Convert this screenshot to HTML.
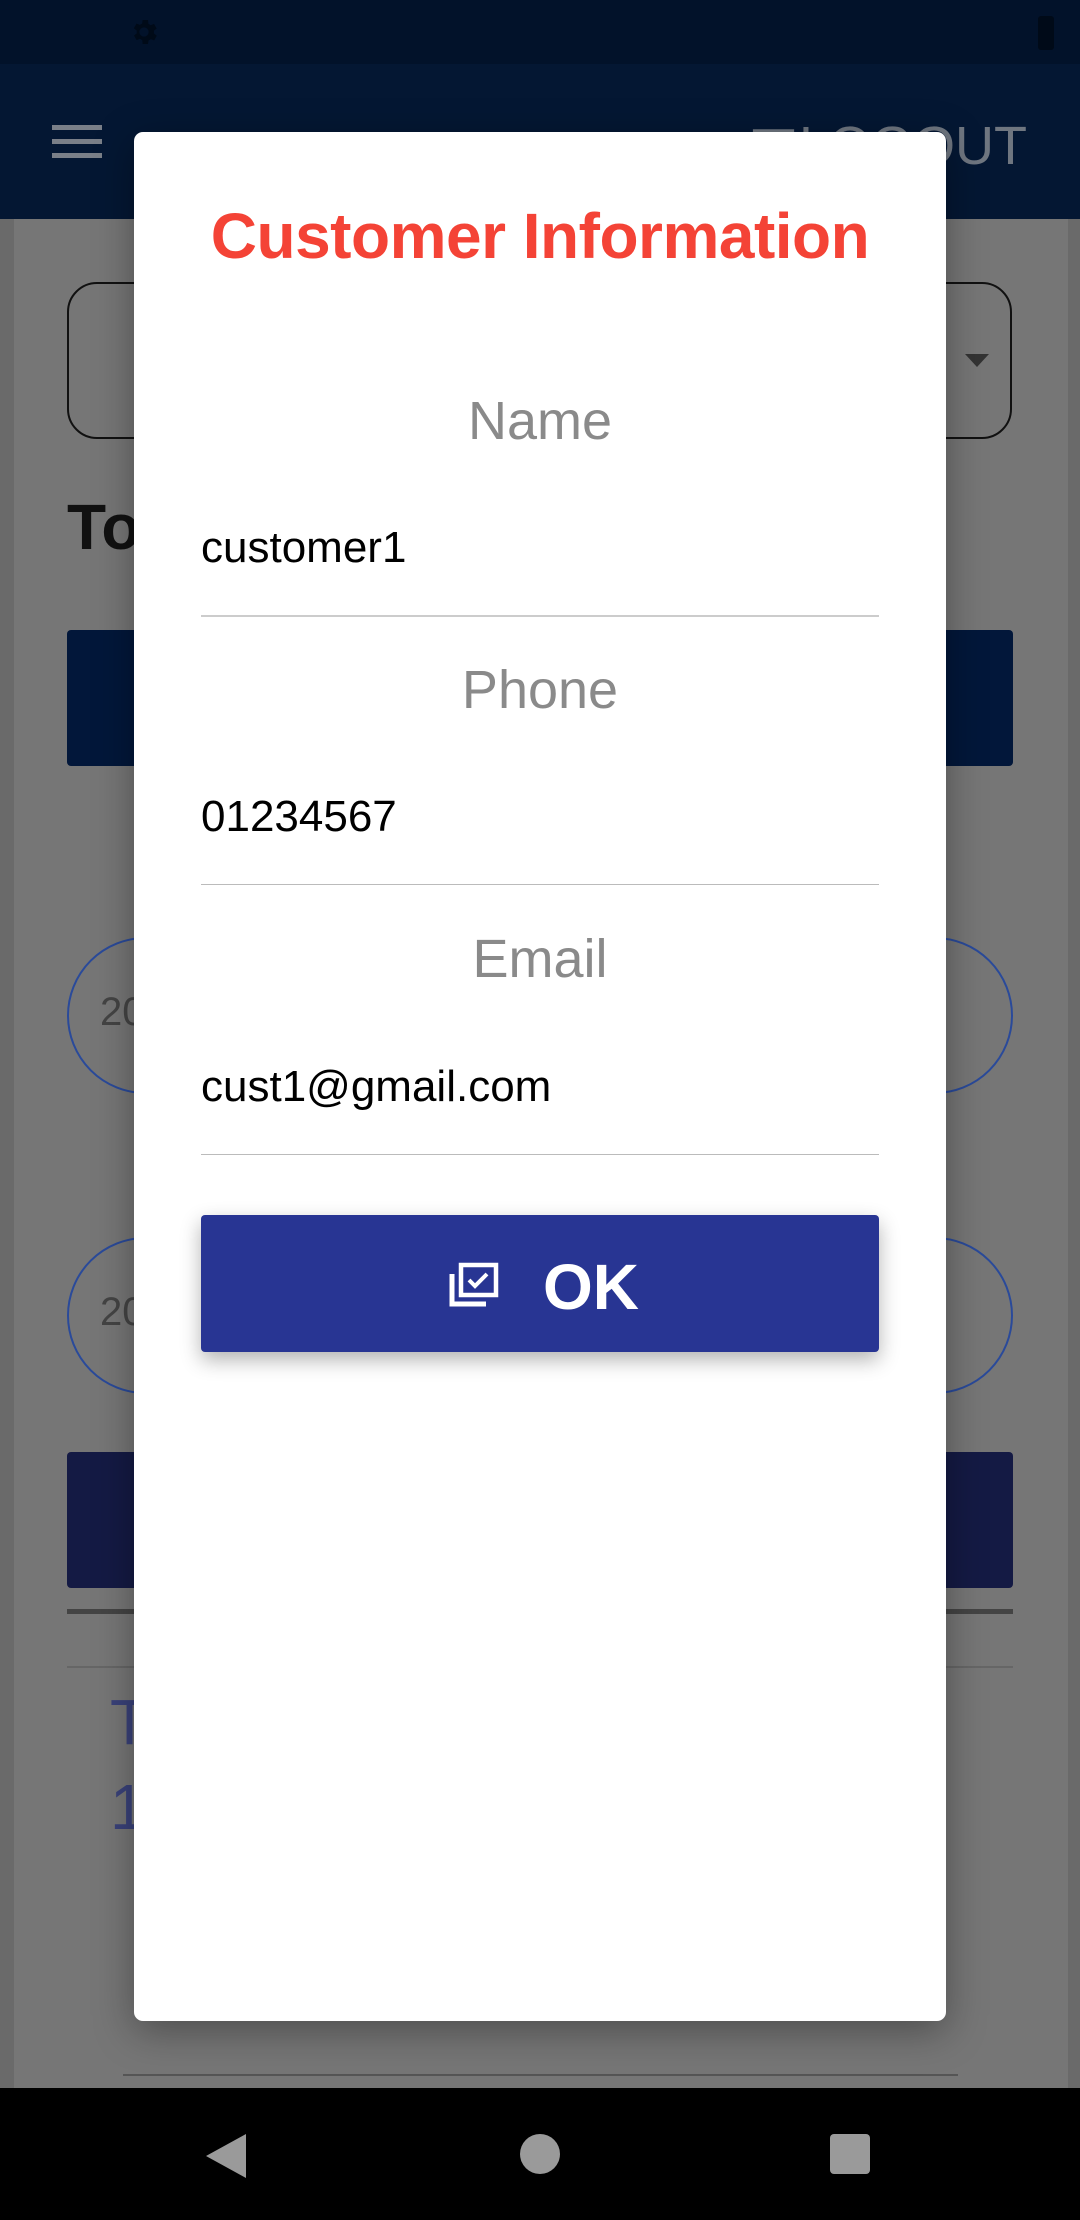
<!DOCTYPE html>
<html><head><meta charset="utf-8"><style>
*{margin:0;padding:0;box-sizing:border-box}
body{width:1080px;height:2220px;position:relative;overflow:hidden;background:#767676;font-family:"Liberation Sans",sans-serif}
.a{position:absolute}
</style></head><body>
<div class="a" style="left:0;top:0;width:1080px;height:64px;background:#02122a"></div>
<svg class="a" style="left:128px;top:16px" width="32" height="32" viewBox="0 0 24 24"><path fill="#000a18" d="M19.4 13a7.5 7.5 0 000-2l2.1-1.6-2-3.5-2.5 1a7 7 0 00-1.7-1L15 3h-4l-.4 2.7a7 7 0 00-1.7 1l-2.5-1-2 3.5L6.6 11a7.5 7.5 0 000 2l-2.1 1.6 2 3.5 2.5-1a7 7 0 001.7 1L11 21h4l.4-2.7a7 7 0 001.7-1l2.5 1 2-3.5zM12 15.5a3.5 3.5 0 110-7 3.5 3.5 0 010 7z"/></svg>
<div class="a" style="left:1038px;top:16px;width:16px;height:34px;background:#000a18;border-radius:3px"></div>
<div class="a" style="left:0;top:64px;width:1080px;height:155px;background:#041733"></div>
<div class="a" style="left:52px;top:125px;width:50px;height:5px;background:#7a7f88;box-shadow:0 14px 0 #7a7f88,0 28px 0 #7a7f88"></div>
<div class="a" style="left:748px;top:114px;font-size:54px;color:#6f7680">▣LOGOUT</div>
<div class="a" style="left:0;top:219px;width:14px;height:1870px;background:#6a6a6a"></div>
<div class="a" style="left:1068px;top:219px;width:12px;height:1870px;background:#6a6a6a"></div>
<div class="a" style="left:67px;top:282px;width:945px;height:157px;border:2px solid #111;border-radius:30px"></div>
<div class="a" style="left:965px;top:354px;width:0;height:0;border-left:12px solid transparent;border-right:12px solid transparent;border-top:13px solid #333"></div>
<div class="a" style="left:67px;top:490px;font-size:64px;font-weight:bold;color:#111">To</div>
<div class="a" style="left:67px;top:630px;width:946px;height:136px;background:#02173a;border-radius:4px"></div>
<div class="a" style="left:67px;top:937px;width:946px;height:157px;border:2px solid #2a4a9a;border-radius:80px"></div>
<div class="a" style="left:100px;top:990px;font-size:40px;color:#444">20</div>
<div class="a" style="left:67px;top:1237px;width:946px;height:157px;border:2px solid #2a4a9a;border-radius:80px"></div>
<div class="a" style="left:100px;top:1290px;font-size:40px;color:#444">20</div>
<div class="a" style="left:67px;top:1452px;width:946px;height:136px;background:#141a44;border-radius:4px"></div>
<div class="a" style="left:67px;top:1609px;width:946px;height:5px;background:#444"></div>
<div class="a" style="left:67px;top:1666px;width:946px;height:2px;background:#666"></div>
<div class="a" style="left:110px;top:1680px;font-size:64px;color:#3a427a;line-height:85px">T<br>1</div>
<div class="a" style="left:123px;top:2074px;width:835px;height:2px;background:#555"></div>
<div class="a" style="left:0;top:2088px;width:1080px;height:132px;background:#000"></div>
<div class="a" style="left:206px;top:2134px;width:0;height:0;border-top:22px solid transparent;border-bottom:22px solid transparent;border-right:40px solid #9a9a9a"></div>
<div class="a" style="left:520px;top:2134px;width:40px;height:40px;border-radius:50%;background:#9a9a9a"></div>
<div class="a" style="left:830px;top:2134px;width:40px;height:40px;border-radius:4px;background:#9a9a9a"></div>

<div class="a" style="left:134px;top:132px;width:812px;height:1889px;background:#fff;border-radius:9px;box-shadow:0 10px 40px rgba(0,0,0,.35)"></div>
<div class="a" style="left:134px;top:199px;width:812px;text-align:center;font-size:64px;font-weight:bold;color:#f44336;letter-spacing:-0.5px">Customer Information</div>
<div class="a" style="left:134px;top:390px;width:812px;text-align:center;font-size:54px;color:#8a8a8a">Name</div>
<div class="a" style="left:201px;top:523px;font-size:44px;color:#000">customer1</div>
<div class="a" style="left:201px;top:615px;width:678px;height:2px;background:#ccc"></div>
<div class="a" style="left:134px;top:659px;width:812px;text-align:center;font-size:54px;color:#8a8a8a">Phone</div>
<div class="a" style="left:201px;top:792px;font-size:44px;color:#000">01234567</div>
<div class="a" style="left:201px;top:884px;width:678px;height:1px;background:#bbb"></div>
<div class="a" style="left:134px;top:928px;width:812px;text-align:center;font-size:54px;color:#8a8a8a">Email</div>
<div class="a" style="left:201px;top:1062px;font-size:44px;color:#000">cust1@gmail.com</div>
<div class="a" style="left:201px;top:1154px;width:678px;height:1px;background:#bbb"></div>
<div class="a" style="left:201px;top:1215px;width:678px;height:137px;background:#283593;border-radius:4px;box-shadow:0 8px 20px rgba(0,0,0,.3)"></div>
<svg class="a" style="left:448px;top:1262px" width="52" height="46" viewBox="0 0 52 46"><path d="M4 12v30h34" fill="none" stroke="#fff" stroke-width="5"/><rect x="13" y="3" width="35" height="30" fill="none" stroke="#fff" stroke-width="4.5"/><path d="M21 18l6 6 12-12" fill="none" stroke="#fff" stroke-width="4"/></svg>
<div class="a" style="left:543px;top:1250px;font-size:64px;font-weight:bold;color:#fff">OK</div>
</body></html>
